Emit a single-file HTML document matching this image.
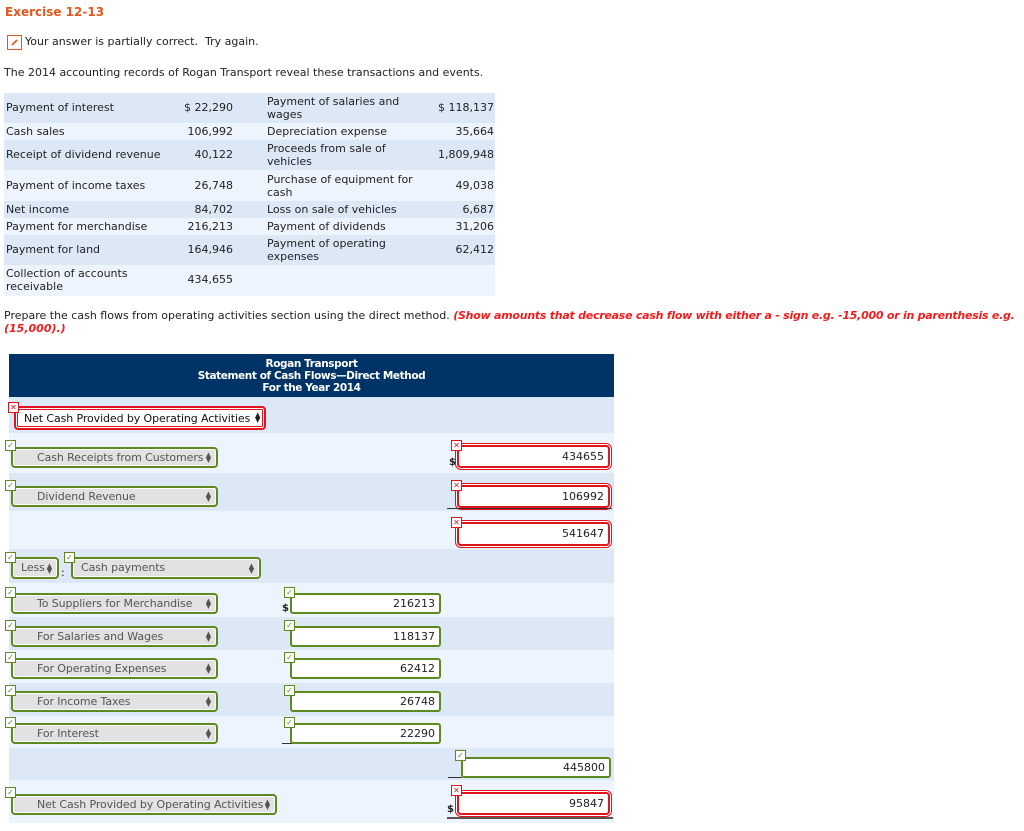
<!DOCTYPE html>
<html><head><meta charset="utf-8"><style>
*{box-sizing:border-box;margin:0;padding:0}
body{width:1024px;height:831px;background:#fff;font-family:"DejaVu Sans","Liberation Sans",sans-serif;font-size:11px;color:#222;position:relative;overflow:hidden}
.a{position:absolute;white-space:nowrap}
.band{position:absolute;left:9px;width:605px}
.d{background:#dde8f7}.l{background:#eef4fd}
.tb{position:absolute;left:4px;width:491px}
.r{text-align:right}
.sel{position:absolute;border:2px solid #5c8a1e;border-radius:4px;background:#e2e2e2;color:#555;font-size:11px;letter-spacing:-0.1px;padding-left:24px;line-height:17px;box-shadow:inset 0 0 0 1px #fff}
.sel .ar{position:absolute;right:5px;top:0;font-size:7px;line-height:8px;color:#555}
.ck{position:absolute;width:11px;height:11px;border:1px solid #5c8a1e;background:#fff;font-size:8px;line-height:9px;text-align:center;color:#5c8a1e;z-index:2}
.xx{position:absolute;width:11px;height:11px;border:1px solid #e0141c;background:#fff;font-size:8px;line-height:9px;text-align:center;color:#e0141c;font-weight:bold;z-index:2}
.in{position:absolute;border:2px solid #5c8a1e;border-radius:3px;background:#fff;text-align:right;padding-right:4px;font-size:11px;line-height:17px;color:#222}
.rin{position:absolute;border:2px solid #e0141c;border-radius:4px;background:#fff;text-align:right;padding-right:4px;font-size:11px;color:#222;box-shadow:0 0 0 1px #fff,0 0 0 2px #e0141c}
.ul{position:absolute;height:1px;background:#333}
</style></head><body>
<div class="a" style="left:5px;top:5px;color:#e2571e;font-weight:bold;font-size:12px">Exercise 12-13</div>
<svg class="a" style="left:7px;top:35px" width="15" height="15"><rect x="0.5" y="0.5" width="14" height="14" fill="#fff" stroke="#e2571e"/><path d="M5 10 L10 5" stroke="#e2571e" stroke-width="1.6"/></svg>
<div class="a" style="left:25px;top:35px">Your answer is partially correct.&nbsp; Try again.</div>
<div class="a" style="left:4px;top:66px">The 2014 accounting records of Rogan Transport reveal these transactions and events.</div>

<div class="tb d" style="top:93px;height:30px"></div>
<div class="tb l" style="top:123px;height:17px"></div>
<div class="tb d" style="top:140px;height:30px"></div>
<div class="tb l" style="top:170px;height:31px"></div>
<div class="tb d" style="top:201px;height:17px"></div>
<div class="tb l" style="top:218px;height:17px"></div>
<div class="tb d" style="top:235px;height:30px"></div>
<div class="tb l" style="top:265px;height:31px"></div>

<div class="a" style="left:6px;top:101px">Payment of interest</div><div class="a r" style="left:150px;width:83px;top:101px">$ 22,290</div>
<div class="a" style="left:267px;top:95px;line-height:13px">Payment of salaries and<br>wages</div><div class="a r" style="left:400px;width:94px;top:101px">$ 118,137</div>
<div class="a" style="left:6px;top:125px">Cash sales</div><div class="a r" style="left:150px;width:83px;top:125px">106,992</div>
<div class="a" style="left:267px;top:125px">Depreciation expense</div><div class="a r" style="left:400px;width:94px;top:125px">35,664</div>
<div class="a" style="left:6px;top:148px">Receipt of dividend revenue</div><div class="a r" style="left:150px;width:83px;top:148px">40,122</div>
<div class="a" style="left:267px;top:142px;line-height:13px">Proceeds from sale of<br>vehicles</div><div class="a r" style="left:400px;width:94px;top:148px">1,809,948</div>
<div class="a" style="left:6px;top:179px">Payment of income taxes</div><div class="a r" style="left:150px;width:83px;top:179px">26,748</div>
<div class="a" style="left:267px;top:173px;line-height:13px">Purchase of equipment for<br>cash</div><div class="a r" style="left:400px;width:94px;top:179px">49,038</div>
<div class="a" style="left:6px;top:203px">Net income</div><div class="a r" style="left:150px;width:83px;top:203px">84,702</div>
<div class="a" style="left:267px;top:203px">Loss on sale of vehicles</div><div class="a r" style="left:400px;width:94px;top:203px">6,687</div>
<div class="a" style="left:6px;top:220px">Payment for merchandise</div><div class="a r" style="left:150px;width:83px;top:220px">216,213</div>
<div class="a" style="left:267px;top:220px">Payment of dividends</div><div class="a r" style="left:400px;width:94px;top:220px">31,206</div>
<div class="a" style="left:6px;top:243px">Payment for land</div><div class="a r" style="left:150px;width:83px;top:243px">164,946</div>
<div class="a" style="left:267px;top:237px;line-height:13px">Payment of operating<br>expenses</div><div class="a r" style="left:400px;width:94px;top:243px">62,412</div>
<div class="a" style="left:6px;top:267px;line-height:13px">Collection of accounts<br>receivable</div><div class="a r" style="left:150px;width:83px;top:273px">434,655</div>

<div class="a" style="left:4px;top:309px;line-height:13px">Prepare the cash flows from operating activities section using the direct method. <b style="color:#f21c1c;font-style:italic;letter-spacing:-0.25px">(Show amounts that decrease cash flow with either a - sign e.g. -15,000 or in parenthesis e.g.</b><br><b style="color:#f21c1c;font-style:italic">(15,000).)</b></div>

<div class="band" style="top:354px;height:43px;background:#003366;color:#fff;font-weight:bold;text-align:center;font-size:10.5px;line-height:12px;padding-top:4px;letter-spacing:-0.4px">Rogan Transport<br>Statement of Cash Flows—Direct Method<br>For the Year 2014</div>
<div class="band d" style="top:397px;height:36px"></div>
<div class="band l" style="top:433px;height:40px"></div>
<div class="band d" style="top:473px;height:38px"></div>
<div class="band l" style="top:511px;height:38px"></div>
<div class="band d" style="top:549px;height:34px"></div>
<div class="band l" style="top:583px;height:34px"></div>
<div class="band d" style="top:617px;height:33px"></div>
<div class="band l" style="top:650px;height:33px"></div>
<div class="band d" style="top:683px;height:33px"></div>
<div class="band l" style="top:716px;height:32px"></div>
<div class="band d" style="top:748px;height:32px"></div>
<div class="band l" style="top:780px;height:43px"></div>

<div class="xx" style="left:8px;top:402px">✕</div>
<div class="a" style="left:14px;top:406px;width:252px;height:24px;border:2px solid #e0141c;border-radius:4px;box-shadow:inset 0 0 0 1px #fff,inset 0 0 0 2px #e0141c;background:#fff"></div>
<div class="a" style="left:24px;top:412px;color:#111;font-size:11px;letter-spacing:-0.1px">Net Cash Provided by Operating Activities</div>
<div class="a" style="left:255px;top:413px;font-size:7px;line-height:5px">▲<br>▼</div>

<div class="ck" style="left:5px;top:440px">✓</div>
<div class="sel" style="left:11px;top:447px;width:207px;height:21px">Cash Receipts from Customers<span class="ar" style="top:4px;line-height:5px">▲<br>▼</span></div>
<div class="ck" style="left:5px;top:480px">✓</div>
<div class="sel" style="left:11px;top:486px;width:207px;height:21px">Dividend Revenue<span class="ar" style="top:4px;line-height:5px">▲<br>▼</span></div>

<div class="ck" style="left:5px;top:552px">✓</div>
<div class="sel" style="left:11px;top:557px;width:48px;height:22px;padding-left:8px">Less<span class="ar" style="top:5px;line-height:5px">▲<br>▼</span></div>
<div class="a" style="left:61px;top:566px">:</div>
<div class="ck" style="left:64px;top:552px">✓</div>
<div class="sel" style="left:71px;top:557px;width:190px;height:22px;padding-left:8px">Cash payments<span class="ar" style="top:5px;line-height:5px">▲<br>▼</span></div>

<div class="ck" style="left:5px;top:587px">✓</div>
<div class="sel" style="left:11px;top:593px;width:207px;height:21px">To Suppliers for Merchandise<span class="ar" style="top:4px;line-height:5px">▲<br>▼</span></div>
<div class="ck" style="left:5px;top:620px">✓</div>
<div class="sel" style="left:11px;top:626px;width:207px;height:21px">For Salaries and Wages<span class="ar" style="top:4px;line-height:5px">▲<br>▼</span></div>
<div class="ck" style="left:5px;top:652px">✓</div>
<div class="sel" style="left:11px;top:658px;width:207px;height:21px">For Operating Expenses<span class="ar" style="top:4px;line-height:5px">▲<br>▼</span></div>
<div class="ck" style="left:5px;top:685px">✓</div>
<div class="sel" style="left:11px;top:691px;width:207px;height:21px">For Income Taxes<span class="ar" style="top:4px;line-height:5px">▲<br>▼</span></div>
<div class="ck" style="left:5px;top:717px">✓</div>
<div class="sel" style="left:11px;top:723px;width:207px;height:21px">For Interest<span class="ar" style="top:4px;line-height:5px">▲<br>▼</span></div>

<div class="a" style="left:282px;top:603px;font-weight:bold;font-size:10px">$</div>
<div class="ck" style="left:284px;top:587px">✓</div><div class="in" style="left:290px;top:593px;width:151px;height:21px">216213</div>
<div class="ck" style="left:284px;top:620px">✓</div><div class="in" style="left:290px;top:626px;width:151px;height:21px">118137</div>
<div class="ck" style="left:284px;top:652px">✓</div><div class="in" style="left:290px;top:658px;width:151px;height:21px">62412</div>
<div class="ck" style="left:284px;top:685px">✓</div><div class="in" style="left:290px;top:691px;width:151px;height:21px">26748</div>
<div class="ck" style="left:284px;top:717px">✓</div><div class="in" style="left:290px;top:723px;width:151px;height:21px">22290</div>
<div class="ul" style="left:282px;top:743px;width:10px"></div>

<div class="a" style="left:449px;top:457px;font-weight:bold;font-size:10px">$</div>
<div class="xx" style="left:451px;top:440px">✕</div><div class="rin" style="left:457px;top:445px;width:153px;height:23px;line-height:19px">434655</div>
<div class="xx" style="left:451px;top:480px">✕</div><div class="rin" style="left:457px;top:485px;width:153px;height:23px;line-height:19px">106992</div>
<div class="ul" style="left:447px;top:508px;width:165px"></div>
<div class="xx" style="left:451px;top:517px">✕</div><div class="rin" style="left:457px;top:522px;width:153px;height:24px;line-height:20px">541647</div>

<div class="ck" style="left:455px;top:750px">✓</div><div class="in" style="left:461px;top:757px;width:150px;height:21px">445800</div>
<div class="ul" style="left:448px;top:777px;width:14px"></div>

<div class="ck" style="left:5px;top:787px">✓</div>
<div class="sel" style="left:11px;top:794px;width:266px;height:21px">Net Cash Provided by Operating Activities<span class="ar" style="top:4px;line-height:5px">▲<br>▼</span></div>
<div class="a" style="left:447px;top:804px;font-weight:bold;font-size:10px">$</div>
<div class="xx" style="left:451px;top:785px">✕</div><div class="rin" style="left:457px;top:792px;width:153px;height:23px;line-height:19px">95847</div>
<div class="ul" style="left:447px;top:817px;width:166px;height:2px;background:#555"></div>
</body></html>
